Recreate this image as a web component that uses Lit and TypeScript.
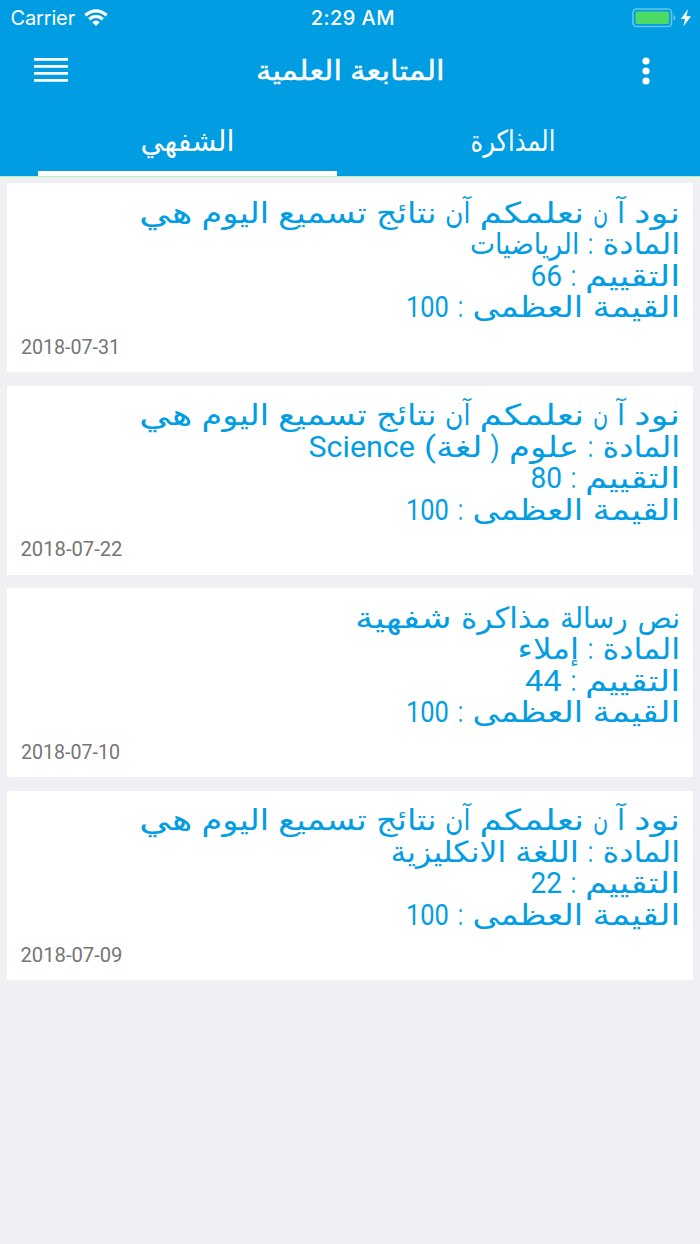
import { LitElement, html, css } from "lit";
import { customElement, property, state } from "lit/decorators.js";

/** A word and the width its glyphs take, in pixels. */
type Word = [text: string, width: number];
interface Note { lines: Word[][]; date: Word; }

const intro: Word[] = [["نود", 44], ["آ", 6], ["ن", 13], ["نعلمكم", 103], ["آن", 23], ["نتائج", 58], ["تسميع", 87], ["اليوم", 66], ["هي", 51]];
const max: Word[] = [["القيمة", 86], ["العظمى", 109], [":", 3], ["100", 41]];
const subject = (...words: Word[]): Word[] => [["المادة", 76], [":", 3], ...words];
const grade = (value: string, width: number): Word[] => [["التقييم", 93], [":", 3], [value, width]];

const NOTES: Note[] = [
  { date: ["2018-07-31", 97], lines: [intro, subject(["الرياضيات", 107]), grade("66", 30), max] },
  { date: ["2018-07-22", 100], lines: [intro, subject(["علوم", 68], ["(", 7], ["لغة)", 56], ["Science", 104]), grade("80", 30), max] },
  { date: ["2018-07-10", 97], lines: [[["نص", 41], ["رسالة", 66], ["مذاكرة", 88], ["شفهية", 95]], subject(["إملاء", 60]), grade("44", 35), max] },
  { date: ["2018-07-09", 100], lines: [intro, subject(["اللغة", 62], ["الانكليزية", 114]), grade("22", 30), max] },
];

/** Stretches or condenses its text to the given width. */
@customElement("fit-word")
class FitWord extends LitElement {
  @property() text = "";
  @property({ type: Number }) width = 0;
  @state() private scale = 1;
  static styles = css`
    :host { display: block; flex: none; }
    .box { display: flex; justify-content: center; white-space: nowrap; }
    .ink { display: block; flex: none; }
  `;
  async firstUpdated() {
    await document.fonts.ready;
    const ink = this.renderRoot.querySelector(".ink") as HTMLElement;
    this.scale = (this.width + 2) / ink.offsetWidth;
  }
  render() {
    return html`<div class="box" style="width:${this.width}px"><span class="ink" style="transform:scaleX(${this.scale})">${this.text}</span></div>`;
  }
}

const words = (list: Word[]) => list.map(([text, width]) => html`<fit-word .text=${text} .width=${width}></fit-word>`);

@customElement("note-card")
class NoteCard extends LitElement {
  @property({ attribute: false }) note!: Note;
  static styles = css`
    :host { display: flex; flex-direction: column; box-sizing: border-box; height: 189px; background: #fff; padding: 14.5px 14px 0 14.5px; }
    .body { direction: rtl; height: 126px; color: #039de3; font: 400 29px/31.5px "Roboto", "DejaVu Sans", sans-serif; }
    .line { display: flex; gap: 11px; height: 31.5px; }
    .date { display: flex; margin-top: 12.4px; color: #757575; font: 400 20px/22px "Roboto", sans-serif; }
  `;
  render() {
    return html`
      <div class="body">${this.note.lines.map((l) => html`<div class="line">${words(l)}</div>`)}</div>
      <div class="date">${words([this.note.date])}</div>`;
  }
}

@customElement("app-root")
class AppRoot extends LitElement {
  static styles = css`
    :host { display: block; height: 1244px; background: #efeff4; overflow: hidden; }
    header { height: 176px; background: #009de3; color: #fff; border-bottom: 1px solid #b4f5b4; display: flex; flex-direction: column; }
    .status { height: 35px; display: grid; grid-template-columns: 1fr auto 1fr; align-items: center; padding: 1px 8px 0 10.5px; box-sizing: border-box; font: 20px/34px Inter, sans-serif; }
    .left { display: flex; align-items: center; gap: 9px; }
    .carrier { letter-spacing: -0.15px; }
    .time { font-weight: 500; font-size: 20px; padding-left: 3px; letter-spacing: 0.45px; }
    .right { display: flex; justify-content: flex-end; }
    svg { display: block; }
    .nav { height: 70px; display: grid; grid-template-columns: 1fr auto 1fr; align-items: center; padding: 0 34px; }
    .title { display: flex; gap: 10px; margin-top: 1px; font: 27px/40px "DejaVu Sans", sans-serif; direction: rtl; -webkit-text-stroke: 0.4px #fff; }
    .dots { justify-self: end; margin: 1px 16.5px 0 0; }
    .tabs { height: 71px; display: grid; grid-template-columns: 299px 299px; padding: 0 38px; gap: 26px; }
    .tab { box-sizing: border-box; display: flex; justify-content: center; padding-top: 5px; font: 29px/62px "DejaVu Sans", sans-serif; direction: rtl; border-bottom: 5px solid transparent; height: 71px; }
    .active { border-color: #fff; }
    main { display: flex; flex-direction: column; gap: 13.6px; padding: 6px 7px; }
  `;
  render() {
    return html`
      <header>
        <div class="status">
          <div class="left"><span class="carrier">Carrier</span>
            <svg width="24" height="18" viewBox="0 0 24 18" fill="none" stroke="#fff" stroke-width="3.2">
              <path d="M1.3 6.3Q12-2.7 22.7 6.3M5.2 10.3Q12 4.5 18.8 10.3"/><path d="M8.2 13.2Q12 10 15.8 13.2L12 17Z" fill="#fff" stroke="none"/>
            </svg>
          </div>
          <div class="time">2:29 AM</div>
          <div class="right">
            <svg width="60" height="20" viewBox="0 0 60 20">
              <rect x="1" y="1" width="38.5" height="17.5" rx="3.5" fill="none" stroke="#66c4ee" stroke-width="1.6"/>
              <rect x="3.5" y="3.5" width="33.5" height="12.5" rx="1.8" fill="#4cd964"/>
              <path d="M41.5 7q2 .8 2 2.8t-2 2.8z" fill="#66c4ee"/>
              <path d="M56 1L48.8 11H53L51.5 18.2L59 8.2H54.4Z" fill="#fff"/>
            </svg>
          </div>
        </div>
        <div class="nav">
          <svg width="34" height="24" viewBox="0 0 34 24" fill="#fff"><path d="M0 0h34v2.7H0zM0 7h34v2.7H0zM0 14h34v2.7H0zM0 21h34v2.7H0z"/></svg>
          <div class="title">${words([["المتابعة", 93], ["العلمية", 84]])}</div>
          <svg class="dots" width="8" height="28" viewBox="0 0 8 28" fill="#fff"><circle cx="4" cy="4" r="3.6"/><circle cx="4" cy="14" r="3.6"/><circle cx="4" cy="24" r="3.6"/></svg>
        </div>
        <div class="tabs"><div class="tab active">${words([["الشفهي", 92]])}</div><div class="tab">${words([["المذاكرة", 83]])}</div></div>
      </header>
      <main>${NOTES.map((n) => html`<note-card .note=${n}></note-card>`)}</main>`;
  }
}
